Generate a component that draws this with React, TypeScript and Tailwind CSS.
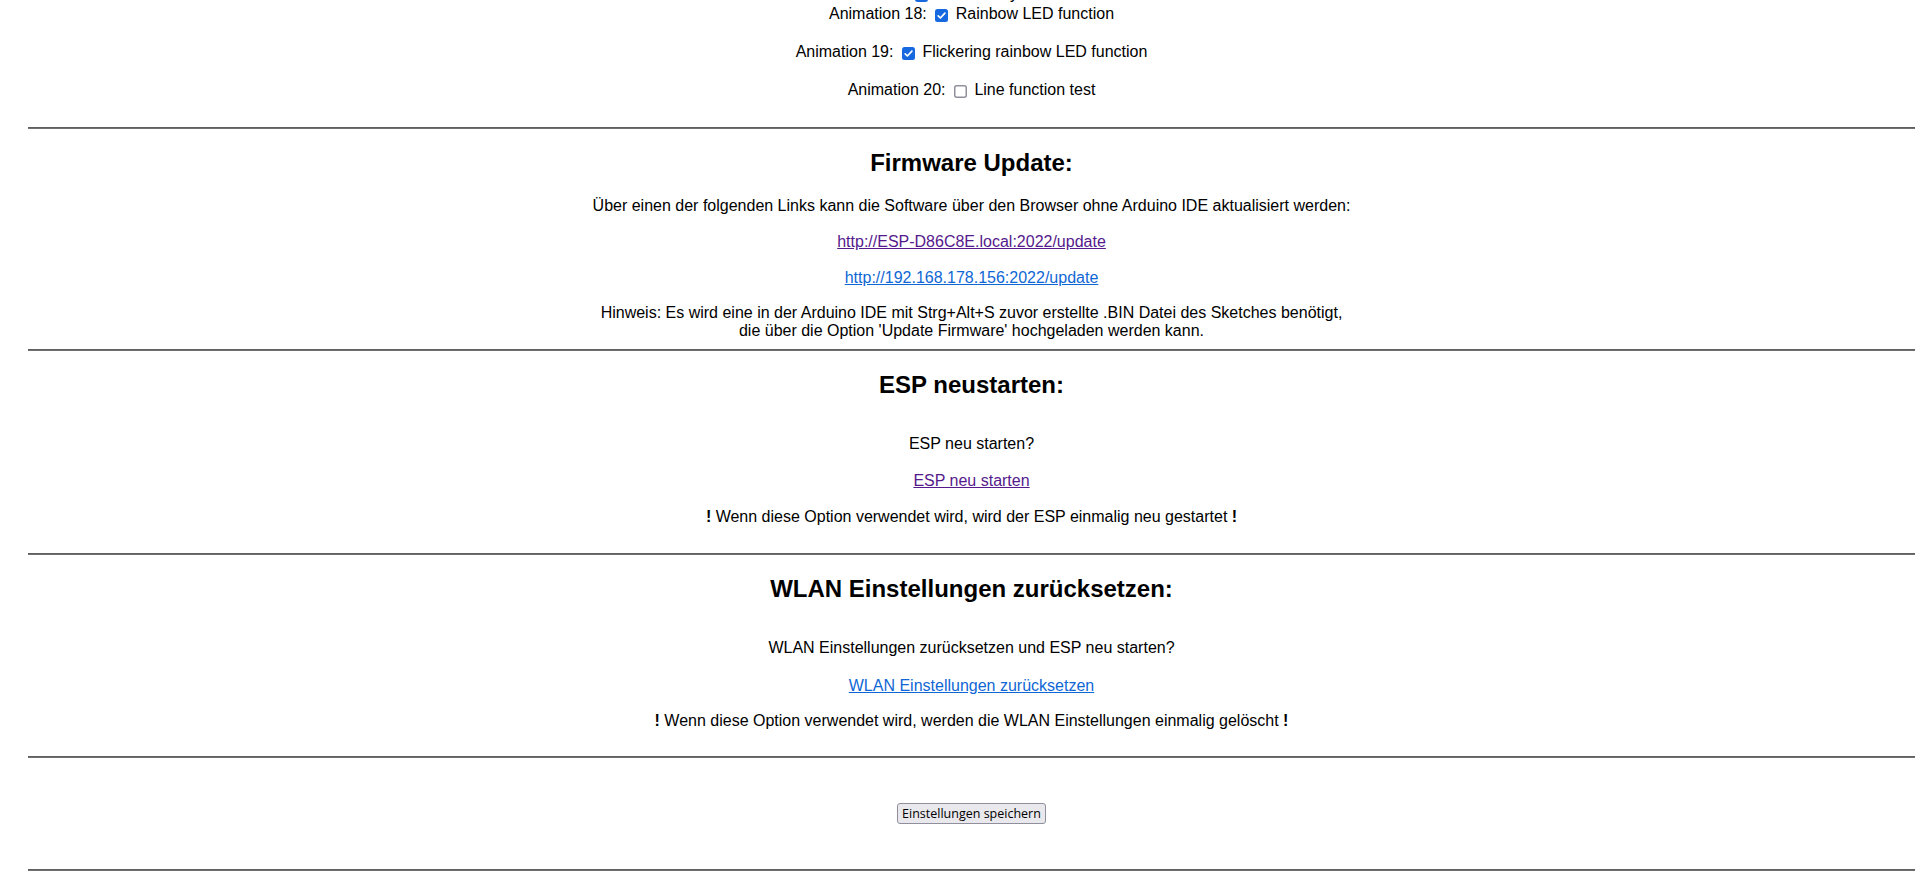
import React from "react";

function Check({ checked }: { checked: boolean }) {
  return (
    <svg
      width="13"
      height="13"
      viewBox="0 0 13 13"
      className="inline-block align-[-3px] ml-[4px] mr-[3px]"
    >
      {checked ? (
        <>
          <rect x="0" y="0" width="13" height="13" rx="2.5" fill="#1769e0" />
          <path
            d="M3.2 6.8 L5.4 9 L9.9 4.2"
            fill="none"
            stroke="#ffffff"
            strokeWidth="1.7"
            strokeLinecap="round"
            strokeLinejoin="round"
          />
        </>
      ) : (
        <rect x="0.75" y="0.75" width="11.5" height="11.5" rx="2" fill="#ffffff" stroke="#8f8f9d" strokeWidth="1.5" />
      )}
    </svg>
  );
}

function Row({ n, checked, label, className }: { n: number; checked: boolean; label: string; className?: string }) {
  return (
    <div className={`h-[18px] leading-[18px] whitespace-nowrap ${className ?? ""}`}>
      Animation {n}:{" "}
      <Check checked={checked} />{" "}
      {label}
    </div>
  );
}

function Hr({ className }: { className?: string }) {
  return <div className={`h-[2px] bg-[#5f5f5f] border-b border-[#707070] self-stretch ${className ?? ""}`} />;
}

function H2({ children, className }: { children: React.ReactNode; className?: string }) {
  return <div className={`h-[28px] leading-[28px] text-[24px] font-bold ${className ?? ""}`}>{children}</div>;
}

function P({ children, className }: { children: React.ReactNode; className?: string }) {
  return <div className={`leading-[18px] ${className ?? ""}`}>{children}</div>;
}

export default function App() {
  return (
    <div className="h-[884px] overflow-hidden bg-white text-black">
      <div
        className="ml-[28px] mr-[5px] flex flex-col items-center text-center text-[16px] -mt-[15px]"
        style={{ fontFamily: '"Liberation Sans", Arial, sans-serif' }}
      >
        <Row n={17} checked={true} label="Rainbow cycle LED function" />
        <Row n={18} checked={true} label="Rainbow LED function" className="mt-[2px]" />
        <Row n={19} checked={true} label="Flickering rainbow LED function" className="mt-[20px]" />
        <Row n={20} checked={false} label="Line function test" className="mt-[20px]" />

        <Hr className="mt-[28px]" />
        <H2 className="mt-[20px]">Firmware Update:</H2>
        <P className="mt-[20px]">
          Über einen der folgenden Links kann die Software über den Browser ohne Arduino IDE aktualisiert werden:
        </P>
        <P className="mt-[18px]">
          <a href="#" className="text-[#551a8b] underline">http://ESP-D86C8E.local:2022/update</a>
        </P>
        <P className="mt-[18px]">
          <a href="#" className="text-[#0f67d5] underline">http://192.168.178.156:2022/update</a>
        </P>
        <div className="mt-[17px] leading-[18.4px]">
          Hinweis: Es wird eine in der Arduino IDE mit Strg+Alt+S zuvor erstellte .BIN Datei des Sketches benötigt,
          <br />
          die über die Option 'Update Firmware' hochgeladen werden kann.
        </div>

        <Hr className="mt-[8px]" />
        <H2 className="mt-[20px]">ESP neustarten:</H2>
        <P className="mt-[36px]">ESP neu starten?</P>
        <P className="mt-[19px]">
          <a href="#" className="text-[#551a8b] underline">ESP neu starten</a>
        </P>
        <P className="mt-[18px]">
          <b>!</b> Wenn diese Option verwendet wird, wird der ESP einmalig neu gestartet <b>!</b>
        </P>

        <Hr className="mt-[27px]" />
        <H2 className="mt-[20px]">WLAN Einstellungen zurücksetzen:</H2>
        <P className="mt-[36px]">WLAN Einstellungen zurücksetzen und ESP neu starten?</P>
        <P className="mt-[20px]">
          <a href="#" className="text-[#0f67d5] underline">WLAN Einstellungen zurücksetzen</a>
        </P>
        <P className="mt-[17px]">
          <b>!</b> Wenn diese Option verwendet wird, werden die WLAN Einstellungen einmalig gelöscht <b>!</b>
        </P>

        <Hr className="mt-[26px]" />
        <button
          type="button"
          className="mt-[45px] h-[21px] px-[4px] rounded-[3px] border border-[#8f8f9d] bg-[#e9e9ed] text-[12.5px] leading-[19px] text-black whitespace-nowrap"
          style={{ fontFamily: '"Open Sans", "Noto Sans", sans-serif' }}
        >
          Einstellungen speichern
        </button>
        <Hr className="mt-[45px]" />
      </div>
    </div>
  );
}
